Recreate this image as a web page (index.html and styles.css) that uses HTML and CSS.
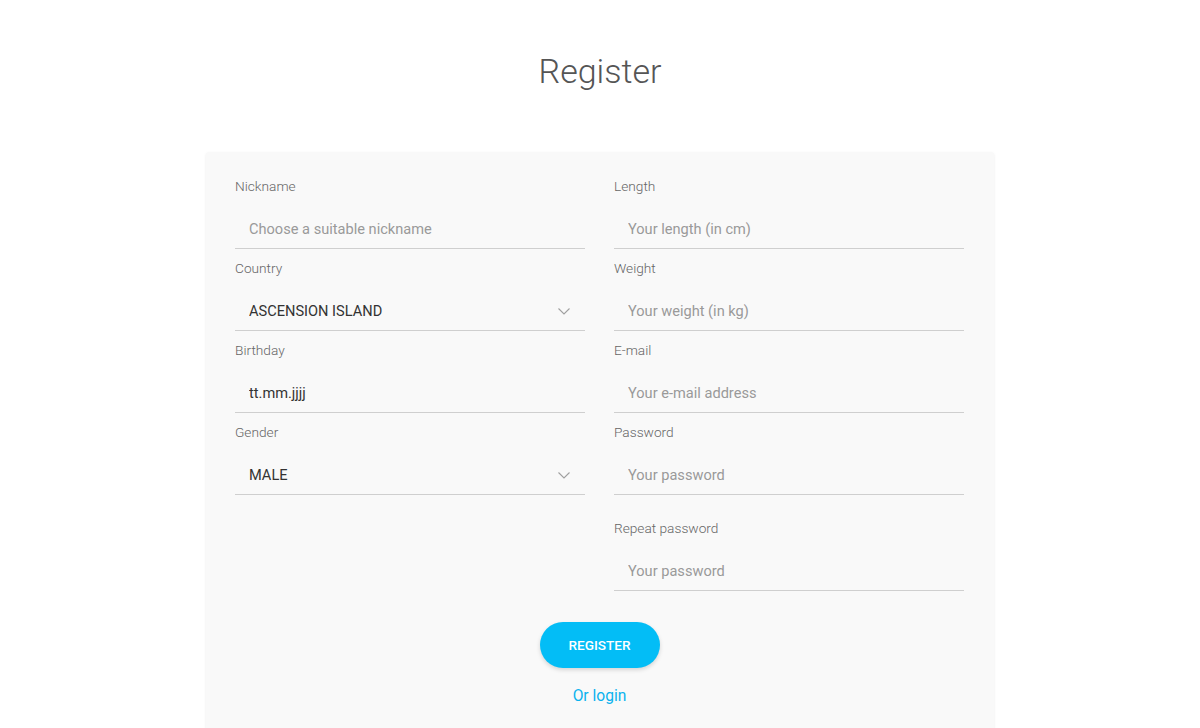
FILE: index.html
```html
<!DOCTYPE html>
<html lang="en">
<head>
  <meta charset="UTF-8">
  <meta name="viewport" content="width=device-width, initial-scale=1.0">
  <title>Register</title>
  <link rel="stylesheet" href="styles.css">
</head>
<body>
  <h1 class="page-title">Register</h1>

  <form class="register-card">
    <div class="columns">
      <div class="column">
        <div class="field">
          <label class="field-label">Nickname</label>
          <input class="field-input" type="text" placeholder="Choose a suitable nickname">
        </div>
        <div class="field">
          <label class="field-label">Country</label>
          <div class="select-wrap">
            <select class="field-input field-select">
              <option>ASCENSION ISLAND</option>
            </select>
            <svg class="chevron" width="12" height="7" viewBox="0 0 12 7"><path d="M0.5 0.5 L6 6 L11.5 0.5" fill="none" stroke="#a0a0a0" stroke-width="1.1"/></svg>
          </div>
        </div>
        <div class="field">
          <label class="field-label">Birthday</label>
          <input class="field-input" type="text" value="tt.mm.jjjj">
        </div>
        <div class="field">
          <label class="field-label">Gender</label>
          <div class="select-wrap">
            <select class="field-input field-select">
              <option>MALE</option>
            </select>
            <svg class="chevron" width="12" height="7" viewBox="0 0 12 7"><path d="M0.5 0.5 L6 6 L11.5 0.5" fill="none" stroke="#a0a0a0" stroke-width="1.1"/></svg>
          </div>
        </div>
      </div>

      <div class="column">
        <div class="field">
          <label class="field-label">Length</label>
          <input class="field-input" type="text" placeholder="Your length (in cm)">
        </div>
        <div class="field">
          <label class="field-label">Weight</label>
          <input class="field-input" type="text" placeholder="Your weight (in kg)">
        </div>
        <div class="field">
          <label class="field-label">E-mail</label>
          <input class="field-input" type="email" placeholder="Your e-mail address">
        </div>
        <div class="field field-spaced">
          <label class="field-label">Password</label>
          <input class="field-input" type="password" placeholder="Your password">
        </div>
        <div class="field">
          <label class="field-label">Repeat password</label>
          <input class="field-input" type="password" placeholder="Your password">
        </div>
      </div>
    </div>

    <div class="actions">
      <button class="register-btn" type="button">REGISTER</button>
      <a class="login-link" href="#">Or login</a>
    </div>
  </form>
</body>
</html>
```

FILE: styles.css
```css
* {
  box-sizing: border-box;
}
body {
  margin: 0;
  background: #fff;
  font-family: Roboto, "Liberation Sans", sans-serif;
  color: #333;
}
.page-title {
  margin: 0;
  padding-top: 49px;
  height: 152px;
  text-align: center;
  font-size: 34px;
  font-weight: 300;
  line-height: 44px;
  color: #555;
}
.register-card {
  width: 788px;
  margin: 0 auto;
  background: #f9f9f9;
  border-radius: 3px;
  box-shadow: 0 1px 3px rgba(0, 0, 0, 0.08);
  padding: 24px 30px 40px 29px;
}
.columns {
  display: grid;
  grid-template-columns: 350px 350px;
  column-gap: 29px;
}
.field {
  display: flex;
  flex-direction: column;
  margin-bottom: 9px;
}
.field-spaced {
  margin-bottom: 23px;
}
.field-label {
  font-size: 13.7px;
  line-height: 20px;
  font-weight: 300;
  color: #666;
  margin-bottom: 14px;
}
.field-input {
  width: 100%;
  height: 39px;
  padding: 0 14px 1px;
  border: none;
  border-bottom: 1px solid #cfcfcf;
  background: transparent;
  font-family: inherit;
  font-size: 14.6px;
  color: #333;
  outline: none;
  border-radius: 0;
}
.field-input::placeholder {
  color: #9a9a9a;
}
.select-wrap {
  position: relative;
}
.field-select {
  appearance: none;
  -webkit-appearance: none;
}
.chevron {
  position: absolute;
  right: 15px;
  top: 16px;
  pointer-events: none;
}
.actions {
  display: flex;
  flex-direction: column;
  align-items: center;
  margin-top: 22px;
}
.register-btn {
  width: 120px;
  height: 46px;
  border: none;
  border-radius: 23px;
  background: #03bdf6;
  color: #fff;
  font-family: inherit;
  font-size: 13.6px;
  font-weight: 500;
  box-shadow: 0 2px 4px rgba(0, 0, 0, 0.15);
  cursor: pointer;
}
.login-link {
  margin-top: 19px;
  font-size: 15.6px;
  color: #0ab2ee;
  text-decoration: none;
}
```
